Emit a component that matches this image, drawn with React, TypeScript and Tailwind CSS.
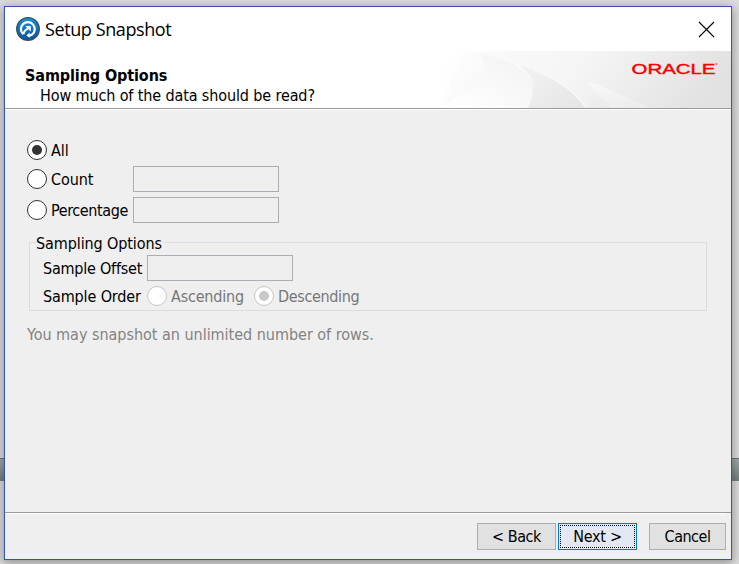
import type { ReactNode } from "react";

function Radio({ checked = false, disabled = false, children }: { checked?: boolean; disabled?: boolean; children: ReactNode }) {
  return (
    <>
      <span
        className={`flex size-5 shrink-0 items-center justify-center rounded-full border bg-white ${
          disabled ? "border-[#c6c6c6]" : "border-[#333333]"
        }`}
      >
        {checked && <span className={`size-2.5 rounded-full ${disabled ? "bg-[#c8c8c8]" : "bg-[#333333]"}`} />}
      </span>
      <span className="pt-0.5">{children}</span>
    </>
  );
}

function Field() {
  return <input disabled className="block h-[26px] w-[146px] shrink-0 border border-[#abadb3] bg-[#efefef]" />;
}

function PushButton({ children, className = "" }: { children: ReactNode; className?: string }) {
  return (
    <button className={`flex h-[27px] items-center justify-center border border-[#adadad] bg-[#e1e1e1] ${className}`}>
      {children}
    </button>
  );
}

function AppIcon() {
  return (
    <svg width="24" height="24" viewBox="0 0 24 24" fill="none">
      <defs>
        <linearGradient id="disc" x1="0" y1="0" x2="0" y2="1">
          <stop offset="0" stopColor="#1691dc" />
          <stop offset="1" stopColor="#0754a8" />
        </linearGradient>
      </defs>
      <circle cx="12" cy="12" r="11.3" fill="url(#disc)" stroke="#3e4c5d" strokeWidth="1.3" />
      <path d="M7.2 17.2A6.9 6.9 0 1 1 16 17.6L13 18.9" stroke="#fff" strokeWidth="2.2" />
      <path d="M13.6 15.4V20.8L10.4 18.6Z" fill="#fff" />
      <path d="M7.6 17.2C7.6 14.6 9 12.9 12 11.6" stroke="#fff" strokeWidth="2" />
      <path d="M9.2 8.9H14.8V14.4Z" fill="#fff" />
    </svg>
  );
}

function BannerArt() {
  return (
    <svg className="block" width="290" height="57" viewBox="0 0 290 57">
      <defs>
        <linearGradient id="base" x1="0" y1="0" x2="1" y2="0.15">
          <stop offset="0" stopColor="#fff" />
          <stop offset="0.2" stopColor="#f9f9f9" />
          <stop offset="0.5" stopColor="#f5f5f5" />
          <stop offset="0.75" stopColor="#ececec" />
          <stop offset="1" stopColor="#e2e2e2" />
        </linearGradient>
        <linearGradient id="leaf" x1="1" y1="0" x2="0.1" y2="0.9">
          <stop offset="0" stopColor="#f2f2f2" />
          <stop offset="0.5" stopColor="#f8f8f8" />
          <stop offset="1" stopColor="#fefefe" />
        </linearGradient>
        <linearGradient id="fold" x1="0" y1="0" x2="1" y2="1">
          <stop offset="0" stopColor="#f3f3f3" />
          <stop offset="1" stopColor="#e5e5e5" />
        </linearGradient>
        <linearGradient id="ray" x1="0" y1="0" x2="1" y2="1">
          <stop offset="0" stopColor="#f8f8f8" />
          <stop offset="1" stopColor="#ebebeb" />
        </linearGradient>
        <linearGradient id="shade" x1="0" y1="0" x2="1" y2="1">
          <stop offset="0" stopColor="#f3f3f3" />
          <stop offset="1" stopColor="#e9e9e9" />
        </linearGradient>
      </defs>
      <rect width="290" height="57" fill="url(#base)" />
      <path d="M0 57V0H25L10 30L5 57Z" fill="#fff" fillOpacity="0.6" />
      <path d="M39 2C70 8 91 20 93 37C94 45 89 51 87 57H0L30 38L48 25Z" fill="url(#leaf)" />
      <path d="M78 14C108 22 132 39 145 57H87C93 43 96 29 78 14Z" fill="url(#fold)" />
      <path d="M39 2C70 8 91 20 93 35M93 20C116 27 135 42 145 57" fill="none" stroke="#fff" strokeWidth="1.2" strokeOpacity="0.6" />
      <path d="M147 36L170 57H148Z" fill="url(#shade)" />
      <path d="M146 32L158 34L210 57H172Z" fill="url(#ray)" />
    </svg>
  );
}

export default function App() {
  return (
    <div className="relative h-[564px] w-[739px] overflow-hidden bg-[#dedede] pl-1 pt-1.5 font-['DejaVu_Sans_Condensed','DejaVu_Sans',sans-serif] text-[16px] leading-5 text-black">
      <div className="absolute left-0 top-[458px] h-[23px] w-full border-t border-[#6c7777] bg-linear-to-b from-[#a2abab] to-[#738080]" />
      <main className="relative flex h-[554px] w-[728px] flex-col border border-[#3850b8] bg-[#efefef] shadow-[0_2px_10px_1px_rgba(0,0,0,0.35)]">
        <div className="flex h-11 shrink-0 items-center justify-between bg-white pl-[11px] pr-4">
          <div className="flex items-center gap-[5px]">
            <AppIcon />
            <h1 className="whitespace-nowrap font-['Open_Sans',sans-serif] text-[18px] leading-6 tracking-[-0.4px]">Setup Snapshot</h1>
          </div>
          <svg width="17" height="17" viewBox="0 0 17 17" stroke="#000" strokeWidth="1.1">
            <path d="M1 1L16 16M16 1L1 16" />
          </svg>
        </div>
        <header className="flex h-[58px] shrink-0 justify-between border-b border-[#9a9a9a] bg-white">
          <div className="whitespace-nowrap pl-5 pt-[15px]">
            <h2 className="font-bold tracking-[-0.1px]">Sampling Options</h2>
            <p className="pl-[15px] tracking-[-0.12px]">How much of the data should be read?</p>
          </div>
          <div className="relative">
            <BannerArt />
            <svg className="absolute right-3 top-2.5" width="90" height="18" viewBox="0 0 90 18" fill="#f80000">
              <text x="2.5" y="13" fontFamily="Liberation Sans" fontSize="15" textLength="84" lengthAdjust="spacingAndGlyphs" stroke="#f80000" strokeWidth="0.4">ORACLE</text>
              <circle cx="87.3" cy="3" r="0.7" />
            </svg>
          </div>
        </header>
        <section className="flex-1 whitespace-nowrap border-t border-white pl-[22px] pr-6 pt-[30px]">
          <label className="flex h-5 items-center gap-1"><Radio checked>All</Radio></label>
          <div className="mt-1.5 flex h-[26px] items-center">
            <label className="flex w-[106px] items-center gap-1 tracking-[-0.1px]"><Radio>Count</Radio></label>
            <Field />
          </div>
          <div className="mt-[5px] flex h-[26px] items-center">
            <label className="flex w-[106px] items-center gap-1 tracking-[-0.4px]"><Radio>Percentage</Radio></label>
            <Field />
          </div>
          <div className="ml-0.5 mt-[19px] h-[69px] border border-[#dcdcdc] pl-[13px]">
            <div className="-ml-[7px] -mt-[9px] flex h-5"><span className="bg-[#efefef] pr-0.5 tracking-[-0.1px]">Sampling Options</span></div>
            <div className="mt-px flex h-[26px] items-center"><span className="w-[104px] pt-0.5 tracking-[-0.22px]">Sample Offset</span><Field /></div>
            <div className="mt-[5px] flex h-5 items-center">
              <span className="w-[104px] pt-0.5 tracking-[-0.13px]">Sample Order</span>
              <label className="flex w-[107px] items-center gap-1 tracking-[-0.2px] text-[#777]"><Radio disabled>Ascending</Radio></label>
              <label className="flex items-center gap-1 tracking-[-0.35px] text-[#777]"><Radio checked disabled>Descending</Radio></label>
            </div>
          </div>
          <p className="mt-3.5 tracking-[-0.02px] text-[#838383]">You may snapshot an unlimited number of rows.</p>
        </section>
        <footer className="flex h-[47px] shrink-0 justify-end border-t border-[#9a9a9a] pr-[5px]">
          <div className="flex w-full justify-end border-t border-white pt-[9px]">
            <PushButton className="w-[79px] tracking-[-0.45px]">&lt; Back</PushButton>
            <button className="ml-0.5 h-[27px] w-[79px] border border-[#0078d7] bg-[#e4e8f0] p-px tracking-[-0.3px]">
              <span className="flex h-full items-center justify-center border border-dotted border-black">Next &gt;</span>
            </button>
            <PushButton className="ml-3 w-[77px] tracking-[-0.5px]">Cancel</PushButton>
          </div>
        </footer>
      </main>
    </div>
  );
}
